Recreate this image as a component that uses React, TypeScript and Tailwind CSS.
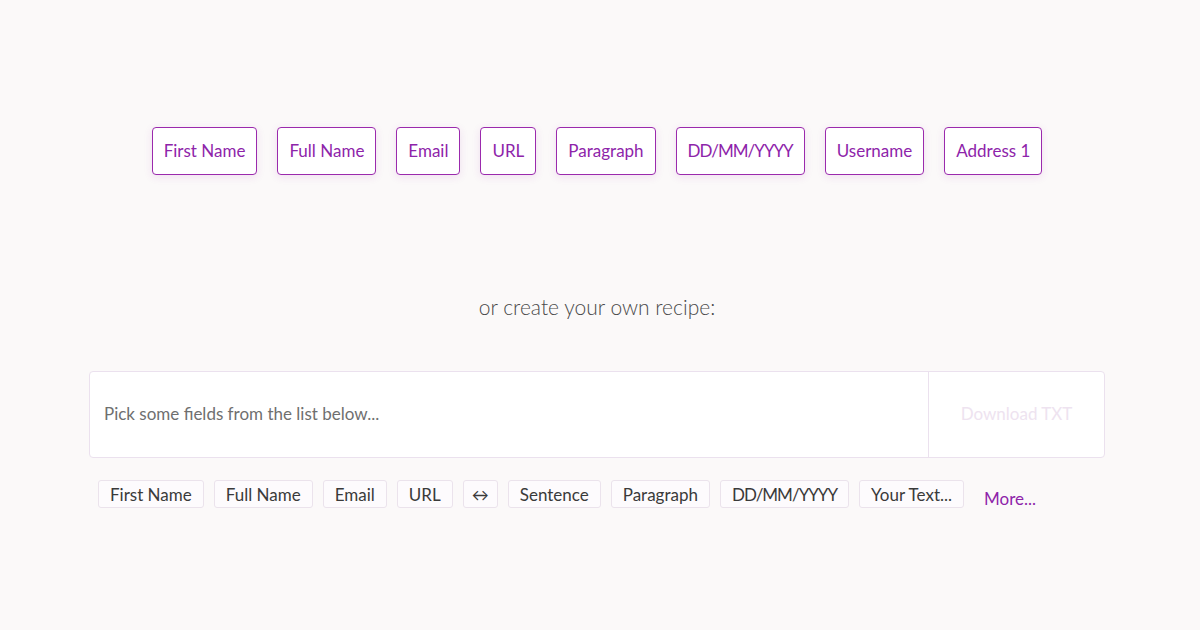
import React from 'react';

const presets = ['First Name', 'Full Name', 'Email', 'URL', 'Paragraph', 'DD/MM/YYYY', 'Username', 'Address 1'];
const fields = ['First Name', 'Full Name', 'Email', 'URL', '↔', 'Sentence', 'Paragraph', 'DD/MM/YYYY', 'Your Text...'];

export default function App() {
  return (
    <div className="w-[1200px] h-[630px] bg-[#fbf9f9] font-['Lato','Noto_Sans',sans-serif] flex flex-col items-center">
      <div className="flex gap-5 mt-[127px] mr-[6px]">
        {presets.map((p) => (
          <button
            key={p}
            className={`h-12 px-[11px] bg-white border border-[#9b2aad] rounded text-[#8e24aa] text-[17px] shadow-[0_2px_8px_rgba(156,39,176,0.12)] ${
              p === 'DD/MM/YYYY' ? 'tracking-[-1px]' : ''
            }`}
          >
            {p}
          </button>
        ))}
      </div>

      <p className="mt-[116px] mr-[6px] text-[21px] font-light text-[#4a4a4a]">or create your own recipe:</p>

      <div className="mt-[48px] mr-[6px] w-[1016px]">
        <div className="flex h-[87px] bg-white border border-[#ebe1ee] rounded">
          <div className="flex-1 flex items-center px-[14px] text-[17px] text-[#6f6f6f]">Pick some fields from the list below...</div>
          <div className="w-[176px] border-l border-[#ebe1ee] flex items-center justify-center text-[17px] text-[#eee3f0]">
            Download TXT
          </div>
        </div>
        <div className="flex items-center gap-[10px] mt-5 pl-[9px]">
          {fields.map((f) => (
            <span
              key={f}
              className={`h-7 flex items-center bg-[#fdfbfd] border border-[#ebe3ec] rounded-[3px] text-[17px] text-[#3a3a3a] ${
                f === '↔' ? 'px-[8px]' : 'px-[11px]'
              } ${f === 'DD/MM/YYYY' ? 'tracking-[-1px]' : ''}`}
            >
              {f}
            </span>
          ))}
          <span className="ml-[10px] mt-2 text-[17px] text-[#8e24aa]">More...</span>
        </div>
      </div>
    </div>
  );
}
